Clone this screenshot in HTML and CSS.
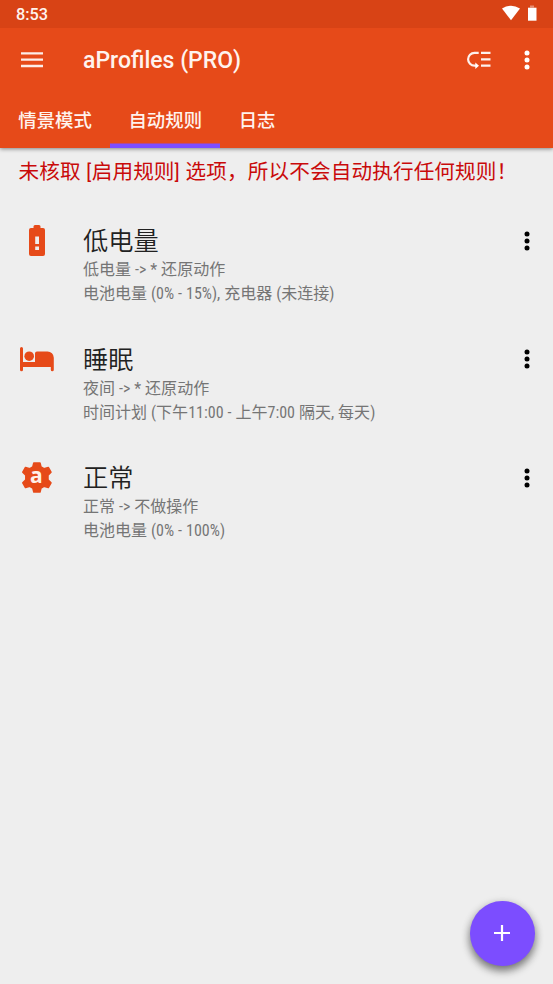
FILE: index.html
```html
<!DOCTYPE html>
<html lang="zh-CN">
<head>
<meta charset="utf-8">
<title>aProfiles</title>
<link rel="stylesheet" href="styles.css">
</head>
<body>
<header class="header">
  <div class="status">
    <span class="clock">8:53</span>
    <svg class="status-icons" width="36" height="18" viewBox="0 0 36 18"><path d="M0 3.6Q9 -2 18 3.6L9 15.2Z" fill="#fff"/><path d="M28 0.5h4v2h-4z" fill="#fff" opacity=".4"/><path d="M26 2.7h8.500v13h-8.500z" fill="#fff"/></svg>
  </div>
  <div class="toolbar">
    <svg class="menu" width="22" height="16" viewBox="0 0 22 16"><path d="M0 1.3h22M0 7.700h22M0 14h22" stroke="#fff" stroke-opacity=".9" stroke-width="2.300"/></svg>
    <h1 class="app-title">aProfiles (PRO)</h1>
    <svg class="sort" width="24" height="18" viewBox="0 0 24 18"><g fill="none" stroke="#fff" stroke-opacity=".92" stroke-width="2.2"><path d="M11.700 1.9H7.5A6.4 6.4 0 0 0 7.5 14.7H9M14 1.9h9.5M14 8.3h9.5M14 14.7h9.5"/></g><path d="M8.3 11.5L12 14.7L8.3 17.9Z" fill="#fff"/></svg>
    <svg class="dots" width="6" height="20" viewBox="0 0 6 20"><circle cx="3" cy="3" r="2.5"/><circle cx="3" cy="10" r="2.5"/><circle cx="3" cy="17" r="2.5"/></svg>
  </div>
  <nav class="tabs">
    <span class="tab">情景模式</span>
    <span class="tab active">自动规则</span>
    <span class="tab">日志</span>
  </nav>
</header>
<main class="content">
  <p class="warning">未核取 [启用规则] 选项，所以不会自动执行任何规则！</p>
  <ul class="rules">
    <li class="rule">
      <div class="icon"><svg width="36" height="36" viewBox="0 0 36 36"><path fill="#e64a19" fill-rule="evenodd" d="M16 3h4a1.500 1.500 0 0 1 1.500 1.500V6H24a2 2 0 0 1 2 2V32a2 2 0 0 1-2 2H12a2 2 0 0 1-2-2V8a2 2 0 0 1 2-2h2.500V4.500A1.500 1.500 0 0 1 16 3zM16.200 14.500v7.500h3.800v-7.500zM16.200 24.500v3.500h3.800v-3.500z"/></svg></div>
      <div class="body"><h2>低电量</h2><p>低电量 -&gt; * 还原动作</p><p>电池电量 (0% - 15%), 充电器 (未连接)</p></div>
      <svg class="dots" width="6" height="20" viewBox="0 0 6 20"><circle cx="3" cy="3" r="2.5"/><circle cx="3" cy="10" r="2.5"/><circle cx="3" cy="17" r="2.5"/></svg>
    </li>
    <li class="rule">
      <div class="icon"><svg width="36" height="36" viewBox="0 0 36 36"><g fill="#e64a19"><path d="M1 7.600a1.500 1.500 0 0 1 3 0V21H16V12.500a2 2 0 0 1 2-2H28.500a6.300 6.300 0 0 1 6.300 6.300V28.800a1.500 1.500 0 0 1-3 0V26H4V28.800a1.500 1.500 0 0 1-3 0z"/><circle cx="10.200" cy="15.200" r="4.800"/></g></svg></div>
      <div class="body"><h2>睡眠</h2><p>夜间 -&gt; * 还原动作</p><p>时间计划 (下午11:00 - 上午7:00 隔天, 每天)</p></div>
      <svg class="dots" width="6" height="20" viewBox="0 0 6 20"><circle cx="3" cy="3" r="2.5"/><circle cx="3" cy="10" r="2.5"/><circle cx="3" cy="17" r="2.5"/></svg>
    </li>
    <li class="rule">
      <div class="icon"><svg width="36" height="36" viewBox="0 0 36 36"><path fill="#e64a19" stroke="#e64a19" stroke-width="1.500" stroke-linejoin="round" d="M14.800 4h6.200l1 4 3 1.700 4.300-1.300 2.700 4.800-3 2.900v4.800l3 2.900-2.700 4.800-4.300-1.300-3 1.700-1 4h-6.200l-1-4-3-1.700-4.300 1.300-2.700-4.800 3-2.900v-4.800l-3-2.900 2.700-4.800 4.300 1.300 3-1.700z"/><text class="gear-letter" x="17.300" y="24.300" text-anchor="middle">a</text></svg></div>
      <div class="body"><h2>正常</h2><p>正常 -&gt; 不做操作</p><p>电池电量 (0% - 100%)</p></div>
      <svg class="dots" width="6" height="20" viewBox="0 0 6 20"><circle cx="3" cy="3" r="2.5"/><circle cx="3" cy="10" r="2.5"/><circle cx="3" cy="17" r="2.5"/></svg>
    </li>
  </ul>
</main>
<button class="fab" aria-label="+"><svg width="16" height="16" viewBox="0 0 16 16"><path d="M8 0v16M0 8h16" stroke="#fff" stroke-width="2.200"/></svg></button>
</body>
</html>
```
FILE: styles.css
```css
* { box-sizing: border-box; margin: 0; padding: 0; }
body {
  height: 984px;
  overflow: hidden;
  background: #eee;
  font-family: Roboto, "Noto Sans CJK SC", sans-serif;
  color: #212121;
}
svg { display: block; flex: none; }
.header {
  height: 148px;
  background: #e64a19;
  color: #fff;
  box-shadow: 0 1px 4px rgba(0,0,0,.45);
}
.status {
  height: 28px;
  background: #d84315;
  display: flex;
  align-items: center;
  justify-content: space-between;
  padding: 0 15.500px 0 16px;
}
.clock { font-size: 16.300px; font-weight: 500; line-height: 28px; padding-top: 1px; color: #fff3ee; }
.status-icons { margin-top: -1px; }
.toolbar {
  height: 64px;
  display: flex;
  align-items: center;
  padding: 0 23px 0 21px;
}
.menu { margin-right: 40px; }
.app-title { flex: 1; font-size: 23px; font-weight: 500; line-height: 32px; padding-top: 2px; color: #fff3ee; white-space: nowrap; }
.sort { margin-right: 33px; }
.dots { fill: #000; }
.toolbar .dots { fill: #fff; }
.tabs { height: 56px; display: flex; }
.tab {
  padding: 0 18.300px;
  font-size: 18.400px;
  font-weight: 500;
  line-height: 58px;
  color: #fff3ee;
}
.active { box-shadow: inset 0 -4.500px #7c4dff; }
.warning {
  padding-left: 18.500px;
  font-size: 20.600px;
  line-height: 30px;
  margin-top: 9px;
  color: #c90a0a;
  font-stretch: 75%;
  font-weight: 400;
  word-spacing: .8px;
  letter-spacing: .14px;
  white-space: nowrap;
}
.rules { list-style: none; padding-top: 35px; }
.rule { height: 118.500px; display: flex; padding-right: 23px; }
.icon { width: 83px; padding-left: 19px; }
.body { flex: 1; }
.rule .dots { margin-top: 8.500px; }
.rule h2 { font-size: 25.200px; font-weight: 350; line-height: 36px; position: relative; top: 2px; }
.rule p {
  font-size: 16px;
  line-height: 24px;
  color: #757575;
  font-weight: 400;
  font-stretch: 75%;
  word-spacing: .2px;
  letter-spacing: .03px;
  white-space: nowrap;
}
.gear-letter { font: 700 21px "Open Sans", sans-serif; fill: #fff0e9; }
.fab {
  position: absolute;
  left: 470px;
  top: 901px;
  width: 64.500px;
  height: 64.500px;
  border: 0;
  border-radius: 50%;
  background: #7c4dff;
  display: flex;
  align-items: center;
  justify-content: center;
  box-shadow: 0 5px 8px rgba(0,0,0,.45), 0 2px 10px rgba(0,0,0,.15);
}
```
